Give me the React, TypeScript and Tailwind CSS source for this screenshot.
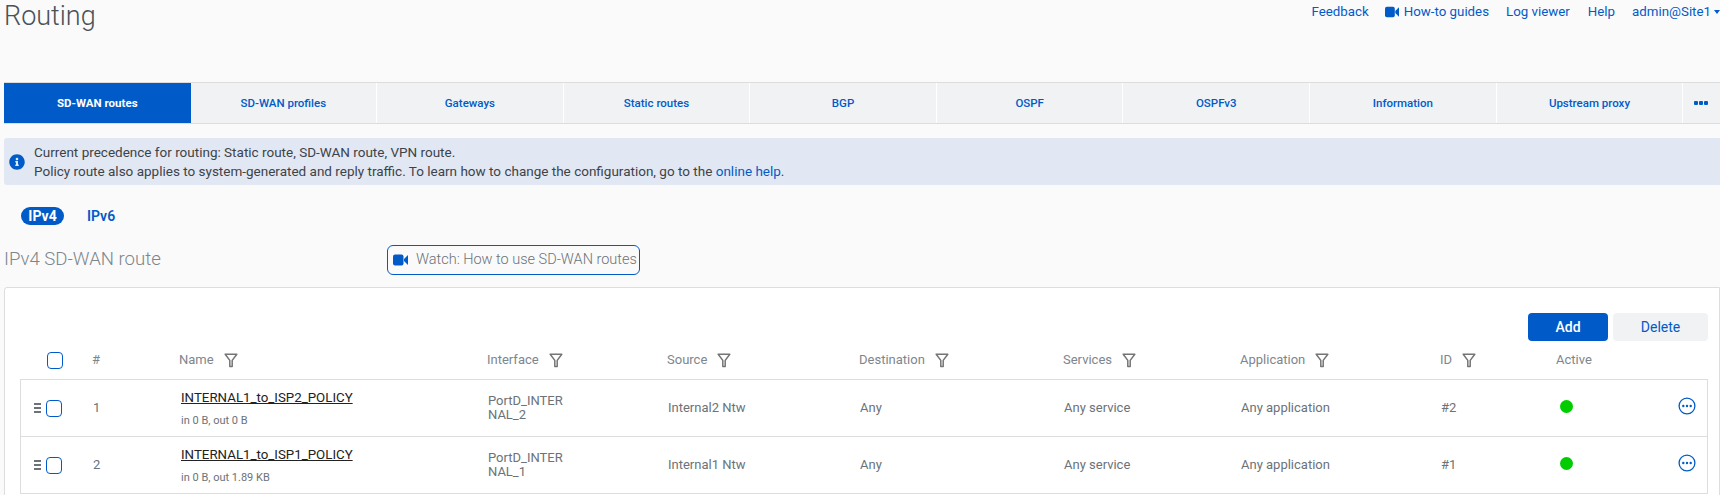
import { FaInfoCircle } from 'react-icons/fa'

const tabs = ['SD-WAN routes', 'SD-WAN profiles', 'Gateways', 'Static routes', 'BGP', 'OSPF', 'OSPFv3', 'Information', 'Upstream proxy']

const columns = 'grid grid-cols-[72px_87px_308px_180px_192px_204px_177px_200px_116px_1fr]'

const rows = [
  { n: 1, name: 'INTERNAL1_to_ISP2_POLICY', traffic: 'in 0 B, out 0 B', port: 'PortD_INTERNAL_2', source: 'Internal2 Ntw', id: '#2' },
  { n: 2, name: 'INTERNAL1_to_ISP1_POLICY', traffic: 'in 0 B, out 1.89 KB', port: 'PortD_INTERNAL_1', source: 'Internal1 Ntw', id: '#1' },
]

function VideoIcon({ className }: { className?: string }) {
  return (
    <svg viewBox="0 0 15 12" className={className} fill="#005bc8">
      <rect x="0" y="0.5" width="10.5" height="11" rx="2" />
      <path d="M11 5 15 1v10l-4-4z" />
    </svg>
  )
}

function FilterIcon() {
  return (
    <svg viewBox="0 0 14 15" className="mt-[1px] w-[14px] h-[15px]" fill="none">
      <path d="M1.2 1.2h11.6L8.2 7.4v6.2H5.8V7.4z" stroke="#757575" strokeWidth="1.5" strokeLinejoin="round" />
    </svg>
  )
}

function Checkbox() {
  return <div className="w-[16px] h-[17px] rounded-[4px] border-[1.5px] border-[#005bc8] bg-white" />
}

function Head({ label, filter = true }: { label: string, filter?: boolean }) {
  return (
    <div className="flex items-center gap-[10px] text-[13px] text-[#7d868e]">
      <span>{label}</span>
      {filter && <FilterIcon />}
    </div>
  )
}

export default function App() {
  return (
    <div className="h-[495px] w-[1720px] overflow-hidden bg-[#fafafa] font-['Roboto',sans-serif]">
      <div className="h-[82px] flex justify-between items-start">
        <h1 className="ml-[4px] text-[27px] leading-[32px] font-light text-[#4a5158]">Routing</h1>
        <div className="flex items-center mt-[4px] text-[13.3px] leading-[16px] text-[#005bc8]">
          <a>Feedback</a>
          <VideoIcon className="ml-[16px] w-[14px] h-[12px]" />
          <a className="ml-[5px]">How-to guides</a>
          <a className="ml-[17px]">Log viewer</a>
          <a className="ml-[18px]">Help</a>
          <a className="ml-[17px]">admin@Site1</a>
          <span className="ml-[3px] w-0 h-0 border-x-[3px] border-t-[4px] border-x-transparent border-t-[#005bc8]" />
        </div>
      </div>

      <div className="ml-[4px] h-[42px] flex border-y border-[#dddddd] bg-[#f1f2f4] text-[11.5px] font-medium text-[#005bc8]">
        {tabs.map((t, i) => (
          <div key={t} className={i === 0
            ? 'w-[186.5px] pt-[1px] flex items-center justify-center bg-[#005bc8] text-white font-bold'
            : 'w-[186.6px] pt-[2px] flex items-center justify-center border-r border-white'}>
            {t}
          </div>
        ))}
        <div className="flex-1 flex items-center justify-center gap-[1px] pr-[2px]">
          <span className="w-[4px] h-[4px] bg-[#005bc8] rounded-[1px]" />
          <span className="w-[4px] h-[4px] bg-[#005bc8] rounded-[1px]" />
          <span className="w-[4px] h-[4px] bg-[#005bc8] rounded-[1px]" />
        </div>
      </div>

      <div className="ml-[4px] mt-[14px] h-[47px] flex items-center bg-[#e2e8f3] rounded-l-[3px] text-[13.5px] leading-[19px] text-[#3d4349]">
        <FaInfoCircle className="ml-[5px] w-[16px] h-[16px] text-[#005bc8]" />
        <div className="ml-[9px]">
          <div>Current precedence for routing: Static route, SD-WAN route, VPN route.</div>
          <div>Policy route also applies to system-generated and reply traffic. To learn how to change the configuration, go to the <a className="text-[#005bc8]">online help</a>.</div>
        </div>
      </div>

      <div className="ml-[21px] mt-[22px] h-[18px] flex items-center text-[14px] font-bold">
        <span className="h-[18px] w-[43px] flex items-center justify-center rounded-full bg-[#005bc8] text-white">IPv4</span>
        <span className="ml-[23px] font-semibold text-[#005bc8]">IPv6</span>
      </div>

      <div className="mt-[20px] h-[30px] flex items-center">
        <h2 className="ml-[4px] -mt-[1px] w-[383px] text-[18.6px] font-light text-[#7d868e]">IPv4 SD-WAN route</h2>
        <div className="w-[253px] h-[30px] flex items-center rounded-[6px] border border-[#005bc8] text-[14.5px] font-light text-[#6b7278]">
          <VideoIcon className="ml-[5px] w-[15px] h-[12px]" />
          <span className="ml-[8px]">Watch: How to use SD-WAN routes</span>
        </div>
      </div>

      <div className="ml-[4px] mt-[12px] h-[220px] bg-white border border-[#dddddd] rounded-tl-[3px] pl-[15px]">
        <div className="mt-[25px] flex justify-end gap-[5px] pr-[11px] text-[14px]">
          <button className="w-[80px] h-[28px] rounded-[4px] bg-[#005bc8] text-white font-medium">Add</button>
          <button className="w-[95px] h-[28px] rounded-[4px] bg-[#f1f2f4] text-[#005bc8]">Delete</button>
        </div>
        <div className={`${columns} h-[38px] items-center w-[1688px]`}>
          <div className="pl-[27px]"><Checkbox /></div>
          <Head label="#" filter={false} />
          <Head label="Name" />
          <Head label="Interface" />
          <Head label="Source" />
          <Head label="Destination" />
          <Head label="Services" />
          <Head label="Application" />
          <Head label="ID" />
          <Head label="Active" filter={false} />
        </div>
        <div className="w-[1688px] border border-[#dddddd] border-b-0">
          {rows.map(r => (
            <div key={r.n} className={`${columns} h-[57px] items-center border-b border-[#dddddd] text-[13px] text-[#6b7278]`}>
              <div className="flex items-center pl-[13px] gap-[5px]">
                <div className="flex flex-col gap-[2px] -mt-[1px]">
                  <span className="w-[7px] h-[2px] bg-[#6b7278]" />
                  <span className="w-[7px] h-[2px] bg-[#6b7278]" />
                  <span className="w-[7px] h-[2px] bg-[#6b7278]" />
                </div>
                <Checkbox />
              </div>
              <div>{r.n}</div>
              <div className="pl-px">
                <div className="mt-[2px] text-[13.3px] text-[#222222] underline">{r.name}</div>
                <div className="mt-[5px] text-[11px] text-[#6b7278]">{r.traffic}</div>
              </div>
              <div className="w-[84px] break-all leading-[14px]">{r.port}</div>
              <div>{r.source}</div>
              <div>Any</div>
              <div>Any service</div>
              <div>Any application</div>
              <div>{r.id}</div>
              <div className="relative flex justify-between items-center pl-[3px] pr-[11px] -mt-[4px]">
                <span className="w-[13px] h-[13px] rounded-full bg-[#00cc00]" />
                <svg viewBox="0 0 18 18" className="w-[18px] h-[18px]" fill="none">
                  <circle cx="9" cy="9" r="7.9" stroke="#005bc8" strokeWidth="1.3" />
                  <circle cx="5.3" cy="9" r="1.2" fill="#005bc8" />
                  <circle cx="9" cy="9" r="1.2" fill="#005bc8" />
                  <circle cx="12.7" cy="9" r="1.2" fill="#005bc8" />
                </svg>
              </div>
            </div>
          ))}
        </div>
      </div>
    </div>
  )
}
